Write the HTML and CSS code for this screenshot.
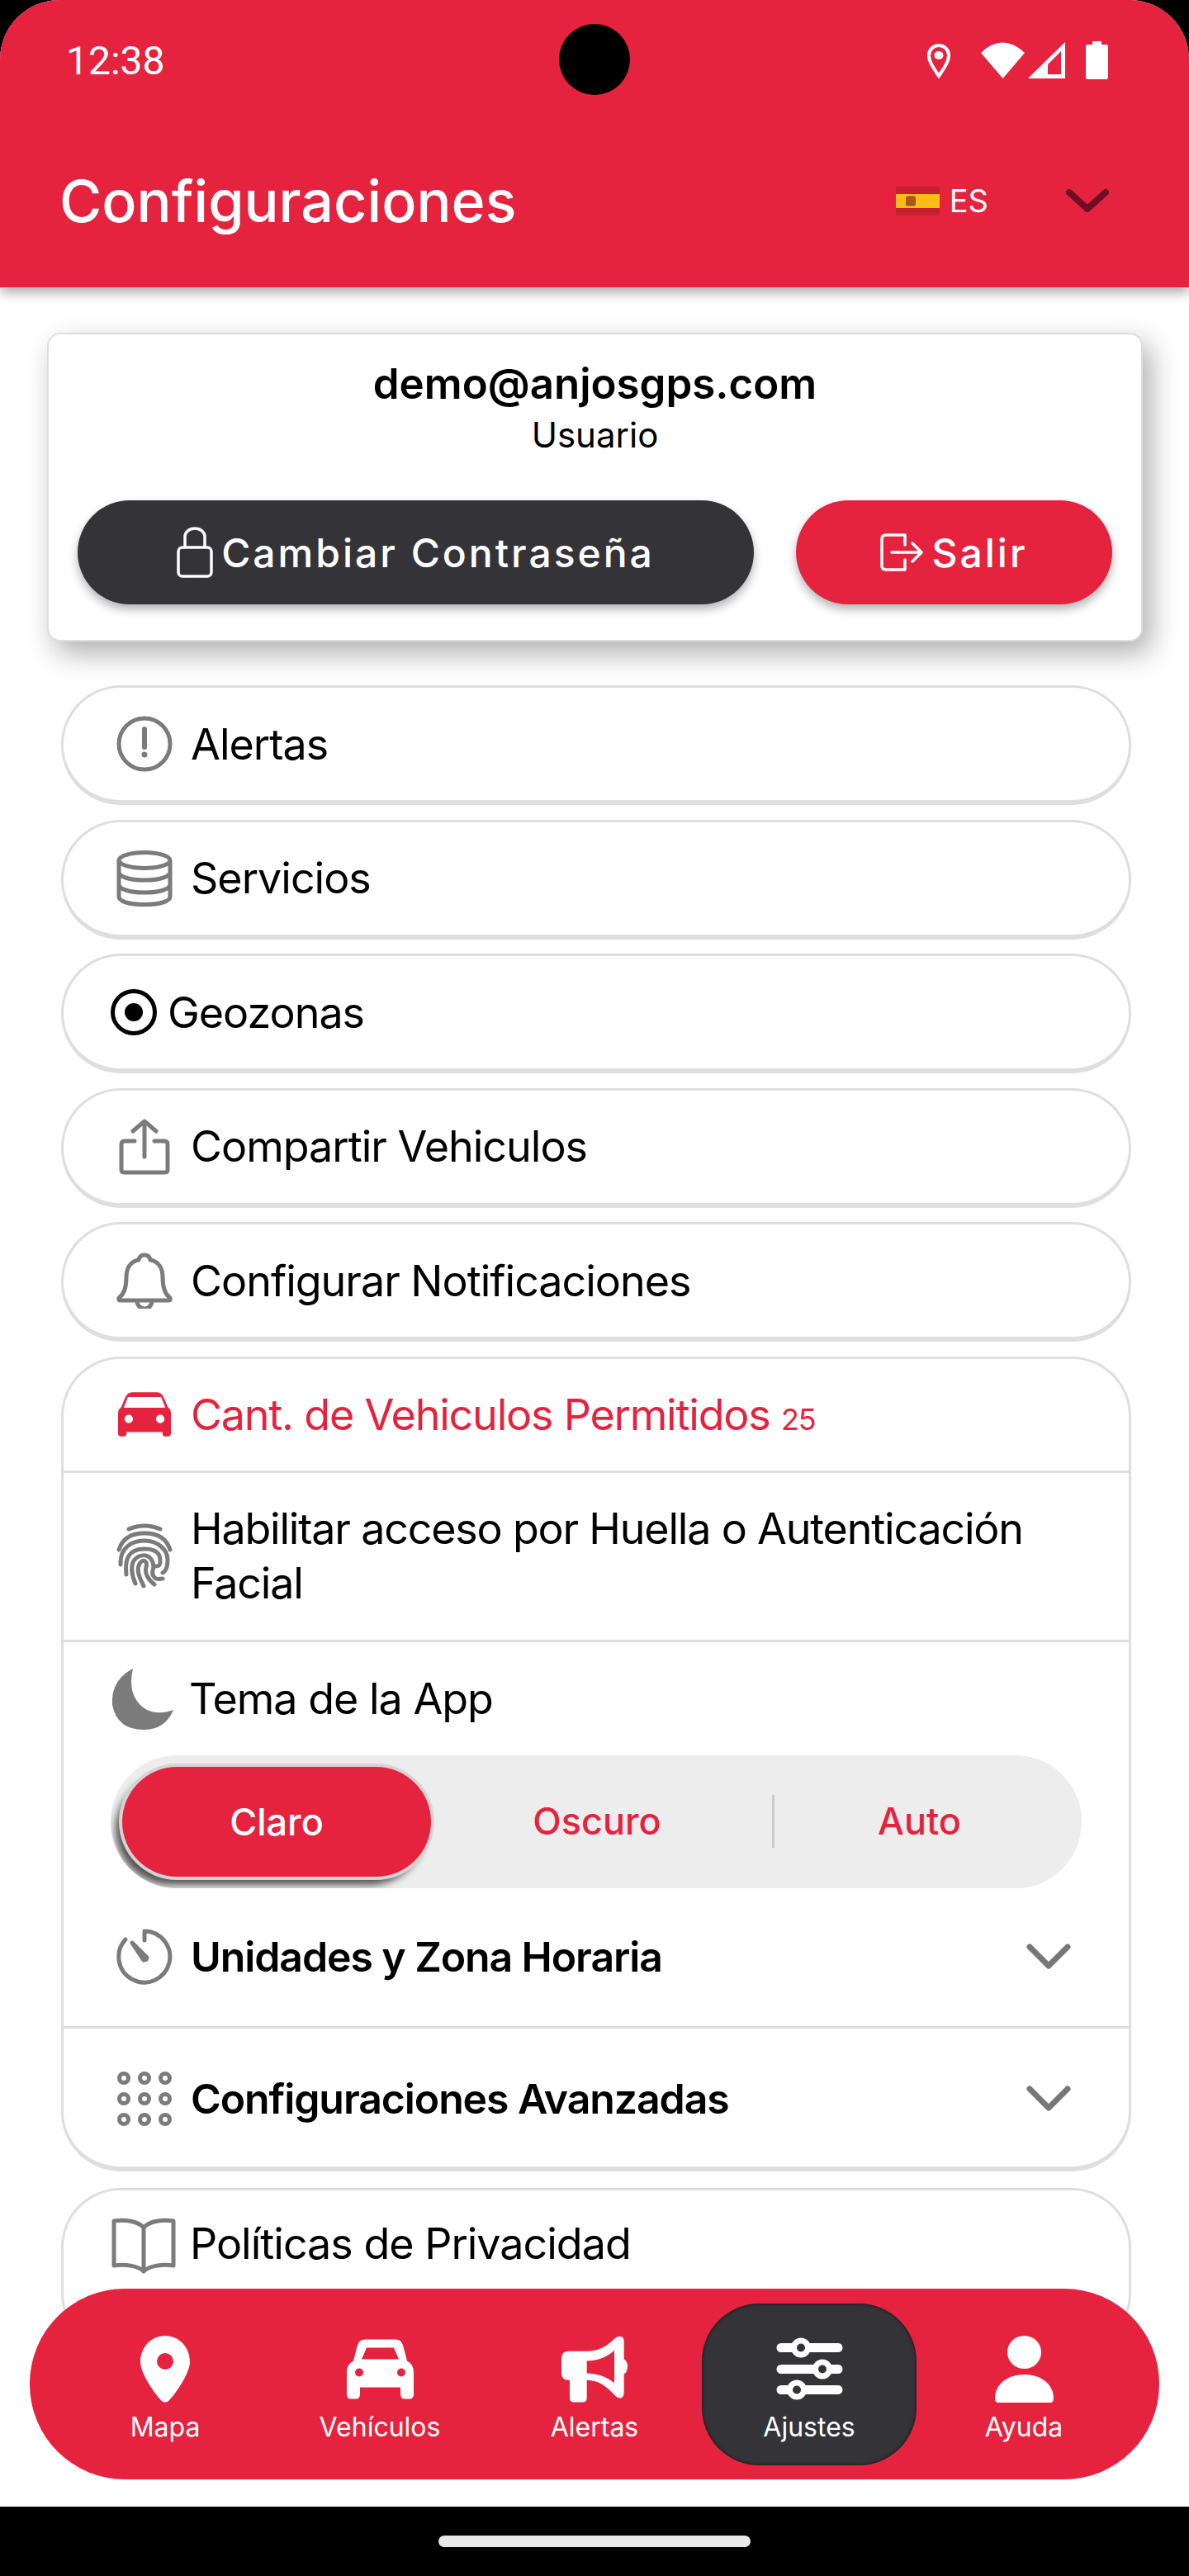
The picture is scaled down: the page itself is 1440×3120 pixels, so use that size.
FILE: index.html
```html
<!DOCTYPE html>
<html lang="es">
<head>
<meta charset="UTF-8">
<title>Configuraciones</title>
<link rel="stylesheet" href="styles.css">
</head>
<body>

<div class="phone">
    <div class="screen">
        <header class="header">
            <div class="status-bar">
                <span class="clock">12:38</span>
                <span class="camera"></span>
                <div class="status-icons">
                    <svg width="30" height="44" viewBox="0 0 30 44"><path d="M15 41C9 32 3 24 3 16A12 12 0 0 1 27 16C27 24 21 32 15 41Z" fill="none" stroke="#fff" stroke-width="4"/><ellipse cx="15" cy="16" rx="5.5" ry="5" fill="#fff"/></svg>
                    <svg class="wifi" width="53" height="44" viewBox="0 0 53 44"><path d="M0 13Q26 -12 53 13L26.500 44Z" fill="#fff"/></svg>
                    <svg width="45" height="44" viewBox="0 0 45 44"><path fill-rule="evenodd" d="M45 0V44H0ZM40 11 24 27V39H40Z" fill="#fff"/></svg>
                    <svg class="battery" width="27" height="46" viewBox="0 0 27 46"><path d="M8 0H19V4H25Q27 4 27 6V43Q27 46 25 46H2Q0 46 0 43V6Q0 4 2 4H8Z" fill="#fff"/></svg>
                </div>
            </div>
            <div class="title-bar">
                <h1>Configuraciones</h1>
                <div class="lang">
                    <svg width="53" height="35" viewBox="0 0 53 35"><rect width="53" height="35" fill="#c4202f"/><rect y="9" width="53" height="17" fill="#fbbd18"/><rect x="12" y="11.500" width="12" height="12" rx="2" fill="#a8561c"/></svg>
                    <span>ES</span>
                </div>
                <svg class="lang-arrow" width="52" height="28" viewBox="0 0 52 28"><path d="M4 4 26 24 48 4" fill="none" stroke="#6f1022" stroke-width="8" stroke-linecap="round" stroke-linejoin="round"/></svg>
            </div>
        </header>

        <main class="content">
            <section class="user-card">
                <div class="user-mail">demo@anjosgps.com</div>
                <div class="user-role">Usuario</div>
                <div class="user-actions">
                    <button class="btn btn-dark">
                        <svg width="44" height="62" viewBox="0 0 44 62" fill="none" stroke="#fff" stroke-width="3.500"><rect x="2" y="25" width="40" height="35" rx="5"/><path d="M10 25V12A12 10 0 0 1 34 12V25"/></svg>
                        Cambiar Contraseña
                    </button>
                    <button class="btn btn-red">
                        <svg width="52" height="46" viewBox="0 0 52 46" fill="none" stroke="#fff" stroke-width="3.500" stroke-linecap="round" stroke-linejoin="round"><path d="M30 2H7Q2 2 2 7V39Q2 44 7 44H30V32M30 14V2M14 23H50M39 12 50 23 39 34"/></svg>
                        Salir
                    </button>
                </div>
            </section>

            <a class="menu-row">
                <svg class="row-icon" viewBox="0 0 68 68" fill="none" stroke="#7b7b7b" stroke-width="5"><circle cx="34" cy="34" r="31"/><path d="M34 16V38" stroke-width="6" stroke-linecap="round"/><circle cx="34" cy="47" r="3.500" fill="#7b7b7b" stroke="none"/></svg>
                Alertas
            </a>
            <a class="menu-row">
                <svg class="row-icon" viewBox="0 0 68 68" fill="none" stroke="#7b7b7b" stroke-width="5"><ellipse cx="34" cy="12" rx="31" ry="9.500"/><path d="M3 12V56C3 62 16 65.500 34 65.500S65 62 65 56V12M3 26C3 32 16 36 34 36S65 32 65 26M3 41C3 47 16 51 34 51S65 47 65 41"/></svg>
                Servicios
            </a>
            <a class="menu-row menu-row-geo">
                <svg class="geo-icon" viewBox="0 0 56 56" fill="none"><circle cx="28" cy="28" r="25.500" stroke="#000" stroke-width="5"/><circle cx="28" cy="28" r="11" fill="#000"/></svg>
                Geozonas
            </a>
            <a class="menu-row">
                <svg class="row-icon" viewBox="0 0 68 68" fill="none" stroke="#7b7b7b" stroke-width="5" stroke-linecap="round" stroke-linejoin="round"><path d="M22 27H10Q6 27 6 31V62Q6 65 10 65H58Q62 65 62 62V31Q62 27 58 27H46M34 46V3M20 15 34 3 48 15"/></svg>
                Compartir Vehiculos
            </a>
            <a class="menu-row">
                <svg class="row-icon" viewBox="0 0 68 68" fill="none" stroke="#7b7b7b" stroke-width="5" stroke-linejoin="round"><path d="M34 3Q40 3 41 9C52 11 56 20 56 30C56 42 58 50 65 55Q66 58 63 58H5Q2 58 3 55C10 50 12 42 12 30C12 20 16 11 27 9Q28 3 34 3Z"/><path d="M25 59A9 9 0 0 0 43 59"/></svg>
                Configurar Notificaciones
            </a>

            <section class="menu-group">
                <div class="group-row group-row-vehicles">
                    <svg class="row-icon row-icon-car" viewBox="0 0 188 157"><path fill-rule="evenodd" d="M50 0H138Q155 0 163 20L178 55Q188 60 188 75V145Q188 157 178 157H168Q158 157 158 145V142H30V145Q30 157 20 157H10Q0 157 0 145V75Q0 60 10 55L25 20Q33 0 50 0ZM35 17 20 55H168L153 17ZM38 80A15 15 0 1 0 38 110 15 15 0 1 0 38 80ZM150 80A15 15 0 1 0 150 110 15 15 0 1 0 150 80Z"/></svg>
                    <span>Cant. de Vehiculos Permitidos <small>25</small></span>
                </div>
                <div class="group-row group-row-finger">
                    <svg class="row-icon row-icon-finger" viewBox="0 0 68 80" fill="none" stroke="#7b7b7b" stroke-width="5" stroke-linecap="round"><path d="M15 7Q34 -1 53 7M3 32C8 16 22 12 34 12S60 16 65 32M5 50C4 30 18 21 34 21S62 32 62 44C62 52 60 58 56 60M12 62C10 44 14 31 34 31S53 42 53 47 50 52 47 52M23 73C18 62 17 50 22 44S38 36 43 45 42 56 44 62 50 68 56 67M33 76C27 64 24 56 28 49S38 46 36 53 38 68 46 74"/></svg>
                    <span>Habilitar acceso por Huella o Autenticación Facial</span>
                </div>
                <div class="theme-block">
                    <div class="theme-title">
                        <svg class="moon-icon" viewBox="0 0 74 74"><path d="M25 0Q18 30 36 46 50 58 74 50 64 74 38 74 6 74 0 44-2 14 25 0Z" fill="#7b7b7b"/></svg>
                        Tema de la App
                    </div>
                    <div class="theme-switch">
                        <div class="theme-option theme-on">Claro</div>
                        <div class="theme-option">Oscuro</div>
                        <div class="theme-option theme-last">Auto</div>
                    </div>
                    <div class="group-row-bold group-row-units">
                        <svg class="row-icon" viewBox="0 0 68 68" fill="none" stroke="#7b7b7b" stroke-width="5" stroke-linecap="round"><path d="M34 3A31 31 0 1 1 11 13M34 3V14"/><path d="M19 17 37 35 33 38Z" fill="#7b7b7b" stroke-linejoin="round"/><circle cx="35" cy="36" r="4" fill="#7b7b7b" stroke="none"/></svg>
                        <span>Unidades y Zona Horaria</span>
                        <svg class="row-arrow" viewBox="0 0 54 31"><path d="M4 4 27 27 50 4" fill="none" stroke="#777" stroke-width="7" stroke-linecap="round" stroke-linejoin="round"/></svg>
                    </div>
                </div>
                <div class="group-row-bold group-row-advanced">
                    <svg class="row-icon" viewBox="0 0 68 68" fill="none" stroke="#7b7b7b" stroke-width="5"><circle cx="9" cy="9" r="5.500"/><circle cx="34" cy="9" r="5.500"/><circle cx="59" cy="9" r="5.500"/><circle cx="9" cy="34" r="5.500"/><circle cx="34" cy="34" r="5.500"/><circle cx="59" cy="34" r="5.500"/><circle cx="9" cy="59" r="5.500"/><circle cx="34" cy="59" r="5.500"/><circle cx="59" cy="59" r="5.500"/></svg>
                    <span>Configuraciones Avanzadas</span>
                    <svg class="row-arrow" viewBox="0 0 54 31"><path d="M4 4 27 27 50 4" fill="none" stroke="#777" stroke-width="7" stroke-linecap="round" stroke-linejoin="round"/></svg>
                </div>
            </section>

            <a class="menu-row menu-row-book">
                <svg class="book-icon" viewBox="0 0 78 68" fill="none" stroke="#7b7b7b" stroke-width="5" stroke-linejoin="round"><path d="M39 12C32 4 16 2 3 4V58C16 56 32 58 39 65 46 58 62 56 75 58V4C62 2 46 4 39 12ZM39 12V65"/></svg>
                Políticas de Privacidad
            </a>
        </main>

        <nav class="bottom-nav">
            <div class="nav-item">
                <svg width="60" height="81" viewBox="0 0 60 81"><path fill="#fff" fill-rule="evenodd" d="M30 0C13 0 0 14 0 32 0 46 20 74 26 79Q30 82 34 79C40 74 60 46 60 32 60 14 47 0 30 0ZM30 21A10 10 0 1 1 30 41 10 10 0 1 1 30 21Z"/></svg>
                <span>Mapa</span>
            </div>
            <div class="nav-item">
                <svg class="nav-car" width="81" height="72" viewBox="0 0 81 72"><path fill="#fff" fill-rule="evenodd" d="M22 0H59Q66 0 68 7L73 26Q81 30 81 40V66Q81 72 76 72H70Q65 72 65 66V58H16V66Q16 72 11 72H5Q0 72 0 66V40Q0 30 8 26L13 7Q15 0 22 0ZM24 10 18 24H63L57 10ZM15 35A5 5 0 1 0 15 45 5 5 0 1 0 15 35ZM66 35A5 5 0 1 0 66 45 5 5 0 1 0 66 35Z"/></svg>
                <span>Vehículos</span>
            </div>
            <div class="nav-item">
                <svg width="80" height="80" viewBox="58 45 240 240"><path fill="#fff" fill-rule="evenodd" d="M85 100H150C195 100 225 80 250 55Q265 42 278 48 285 52 285 65V128Q298 135 298 155T285 183V250Q285 265 275 270 262 272 250 258C225 232 195 205 150 205V270Q150 285 135 285H103Q88 285 88 270V205H85Q58 205 58 180V125Q58 100 85 100ZM150 135V180C190 180 225 195 250 215V97C225 120 190 135 150 135Z"/></svg>
                <span>Alertas</span>
            </div>
            <div class="nav-item nav-active">
                <svg width="81" height="76" viewBox="0 0 81 76" fill="none"><g stroke="#fff" stroke-width="11" stroke-linecap="round"><path d="M6 12H75M6 38H75M6 63H75"/></g><g fill="#343438" stroke="#fff" stroke-width="7"><circle cx="30" cy="12" r="8.500"/><circle cx="56" cy="38" r="8.500"/><circle cx="25" cy="63" r="8.500"/></g></svg>
                <span>Ajustes</span>
            </div>
            <div class="nav-item">
                <svg width="71" height="81" viewBox="0 0 71 81"><ellipse cx="35.500" cy="20" rx="20.500" ry="20" fill="#fff"/><path d="M0 76C0 58 16 47 35.500 47S71 58 71 76Q71 81 67 81H4Q0 81 0 76Z" fill="#fff"/></svg>
                <span>Ayuda</span>
            </div>
        </nav>
    </div>
    <div class="home-area"><span class="home-bar"></span></div>
</div>

</body>
</html>
```

FILE: styles.css
```css
:root {
    --red: #e6233f;
    --dark: #343438;
    --line: #dedede;
}

* {
    margin: 0;
    padding: 0;
    box-sizing: border-box;
}

html {
    overflow: hidden;
}

body {
    background: #000;
    font-family: 'Inter', sans-serif;
    color: #000;
}

.phone {
    width: 1440px;
    height: 3120px;
    display: flex;
    flex-direction: column;
    overflow: hidden;
}

.screen {
    position: relative;
    height: 3036px;
    background: #fff;
    border-radius: 72px 72px 0 0;
    overflow: hidden;
}

/* Header */
.header {
    position: relative;
    height: 348px;
    background: var(--red);
    color: #fff;
    box-shadow: 0 6px 14px rgba(0, 0, 0, 0.35);
}

.status-bar {
    height: 146px;
    display: flex;
    align-items: center;
    justify-content: space-between;
    padding: 0 98px 0 80px;
    position: relative;
}

.clock {
    font-family: 'Roboto', sans-serif;
    font-size: 48px;
}

.camera {
    position: absolute;
    left: 677px;
    top: 29px;
    width: 86px;
    height: 86px;
    border-radius: 50%;
    background: #000;
}

.status-icons {
    display: flex;
    align-items: center;
    gap: 36px;
}

.status-icons .wifi {
    margin-right: -32px;
}

.status-icons .battery {
    margin-left: -11px;
}

.title-bar {
    display: flex;
    align-items: center;
    padding: 0 97px 0 72px;
    height: 100px;
    margin-top: 47px;
}

h1 {
    font-size: 70px;
    font-weight: 500;
    flex: 1;
}

.lang {
    display: flex;
    align-items: center;
    gap: 12px;
    font-size: 38px;
    margin-right: 94px;
}

/* User card */
.content {
    padding: 55px 70px 0 74px;
}

.user-card {
    width: 1327px;
    height: 374px;
    margin: 0 0 53px -17px;
    padding: 29px 35px 0;
    background: #fff;
    border: 2px solid var(--line);
    border-radius: 16px;
    box-shadow: 10px 14px 34px rgba(0, 0, 0, 0.32);
    text-align: center;
}

.user-mail {
    font-size: 51px;
    font-weight: 600;
    line-height: 62px;
}

.user-role {
    font-size: 42px;
    line-height: 56px;
    margin-top: 3px;
}

.user-actions {
    display: flex;
    justify-content: space-between;
    margin-top: 51px;
}

.btn {
    height: 126px;
    display: flex;
    align-items: center;
    justify-content: center;
    gap: 10px;
    border: none;
    border-radius: 63px;
    color: #fff;
    font-family: inherit;
    font-size: 48px;
    font-weight: 500;
    letter-spacing: 3px;
    box-shadow: 0 6px 12px rgba(0, 0, 0, 0.3);
}

.btn-dark {
    width: 819px;
    background: var(--dark);
}

.btn-red {
    width: 383px;
    background: var(--red);
}

/* Menu rows */
.menu-row {
    height: 145px;
    margin-bottom: 17.5px;
    padding-left: 64px;
    display: flex;
    align-items: center;
    gap: 22px;
    border: 3px solid var(--line);
    border-bottom-width: 6px;
    border-radius: 72px;
    font-size: 52px;
    letter-spacing: -1px;
}

.row-icon {
    width: 68px;
    height: 68px;
    flex: none;
}

.menu-row-geo {
    padding-left: 57px;
    gap: 13px;
}

.geo-icon {
    width: 56px;
    height: 56px;
}

.menu-group {
    height: 987px;
    margin-bottom: 20px;
    border: 3px solid var(--line);
    border-bottom-width: 6px;
    border-radius: 72px;
}

.group-row {
    display: flex;
    align-items: center;
    gap: 22px;
    padding-left: 64px;
    font-size: 52px;
    letter-spacing: -1.2px;
    border-bottom: 3px solid var(--line);
}

.group-row-vehicles {
    height: 138px;
    color: var(--red);
}

.group-row-vehicles small {
    font-size: 36px;
}

.row-icon-car {
    width: 64px;
    height: 54px;
    margin: 0 2px;
    fill: var(--red);
}

.group-row-finger {
    height: 205px;
    line-height: 66px;
}

.row-icon-finger {
    height: 80px;
}

.theme-block {
    height: 468px;
    border-bottom: 3px solid var(--line);
    padding-top: 32px;
}

.theme-title {
    height: 74px;
    display: flex;
    align-items: center;
    gap: 19px;
    padding-left: 59px;
    font-size: 52px;
    letter-spacing: -1px;
}

.moon-icon {
    width: 74px;
    height: 74px;
}

.theme-switch {
    display: grid;
    grid-template-columns: 363px 424px 354px;
    align-items: center;
    width: 1176px;
    height: 161px;
    margin: 31px 0 0 57px;
    padding-left: 14px;
    background: #ededed;
    border-radius: 80px;
    overflow: hidden;
    color: var(--red);
    font-size: 45px;
    font-weight: 500;
    text-align: center;
}

.theme-option {
    line-height: 64px;
}

.theme-on {
    width: 374px;
    height: 133px;
    line-height: 133px;
    background: var(--red);
    color: #fff;
    border-radius: 67px;
    box-shadow: 0 0 0 4px #d4d4d4, -8px 10px 10px rgba(0, 0, 0, 0.65);
}

.theme-last {
    border-left: 3px solid #ccc;
}

.group-row-bold {
    display: flex;
    align-items: center;
    gap: 22px;
    padding: 0 70px 0 64px;
    font-size: 50px;
    font-weight: 600;
    letter-spacing: -1.1px;
}

.group-row-bold span {
    flex: 1;
}

.group-row-units {
    height: 166px;
}

.group-row-advanced {
    height: 170px;
}

.row-arrow {
    width: 54px;
    height: 31px;
}

.menu-row-book {
    padding-left: 58px;
    gap: 17px;
    height: 200px;
    align-items: flex-start;
    padding-top: 33px;
}

.book-icon {
    width: 78px;
    height: 68px;
}

/* Bottom nav */
.bottom-nav {
    position: absolute;
    left: 36px;
    top: 2772px;
    width: 1368px;
    height: 231px;
    padding: 18px 34px;
    display: grid;
    grid-template-columns: repeat(5, 1fr);
    background: var(--red);
    border-radius: 115px;
    color: #fff;
    font-size: 32px;
}

.nav-item {
    display: flex;
    flex-direction: column;
    align-items: center;
    padding-top: 39px;
    height: 196px;
    border-radius: 70px;
}

.nav-item svg {
    height: 81px;
}

.nav-item span {
    margin-top: 10px;
}

.nav-active {
    background: var(--dark);
    box-shadow: inset 0 0 4px rgba(0, 0, 0, 0.7);
}

/* Android gesture bar */
.home-area {
    flex: 1;
    display: flex;
    align-items: center;
    justify-content: center;
}

.home-bar {
    width: 378px;
    height: 14px;
    border-radius: 7px;
    background: #e8e8e8;
}
```
